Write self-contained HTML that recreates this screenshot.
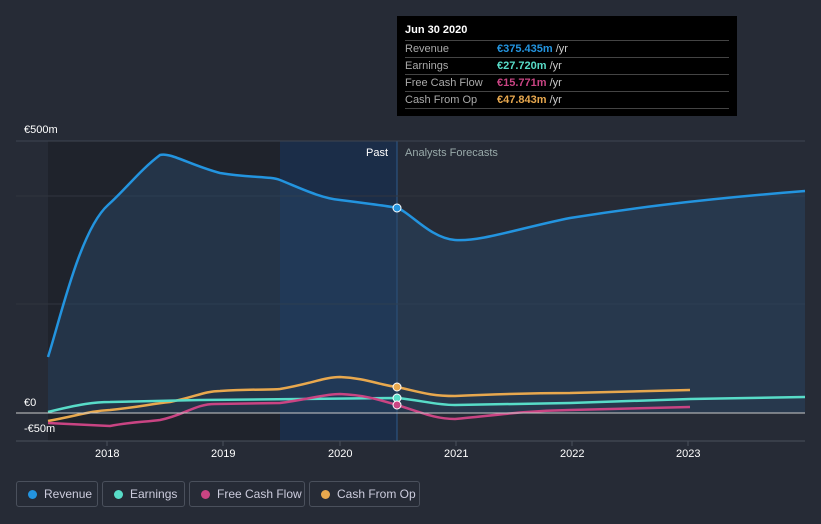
<!DOCTYPE html><html><head><style>
body{margin:0;width:821px;height:524px;background:#262b36;font-family:"Liberation Sans",sans-serif;overflow:hidden;position:relative}
.t{position:absolute;font-size:11px;color:#fff}
.lg{position:absolute;top:481px;height:26px;border:1px solid #4a505c;border-radius:3px;box-sizing:border-box;color:#ccd;font-size:12px;line-height:24px;padding-left:27px}
.lg i{position:absolute;left:11px;top:8px;width:9px;height:9px;border-radius:50%}
.tip{position:absolute;left:397px;top:16px;width:340px;height:100px;background:#000;font-size:11px}
.tip .r{position:absolute;left:8px;width:324px;border-top:1px solid #444;height:16px;line-height:16px;color:#aaa}
.tip .r b{position:absolute;left:92px;font-weight:bold}
.tip .r span{color:#ccc;font-weight:normal}
</style></head><body>
<svg width="821" height="524" style="position:absolute;left:0;top:0">
<rect x="48" y="141" width="349" height="300" fill="#1f232c"/>
<rect x="280" y="141" width="117" height="300" fill="#1a3050" opacity="0.8"/>
<line x1="397" y1="141" x2="397" y2="441" stroke="#2e5a8c" stroke-width="1"/>
<line x1="16" y1="141" x2="805" y2="141" stroke="#3f4551"/>
<line x1="16" y1="196" x2="805" y2="196" stroke="#30353f"/>
<line x1="16" y1="304" x2="805" y2="304" stroke="#30353f"/>
<line x1="16" y1="441" x2="805" y2="441" stroke="#4a505c"/>
<path d="M48,357 C60,320 80,230 108,205 C125,190 140,170 160,155 C170,152 190,165 220,173 C250,178 270,176 280,180 C300,188 320,198 340,200 C370,204 390,206 397,208 C410,212 430,238 455,240 C480,242 520,228 570,218 C620,210 690,200 805,191 L805,413 L48,413Z" fill="#2a4a6a" opacity="0.45"/>
<path d="M48,357 C60,320 80,230 108,205 C125,190 140,170 160,155 C170,152 190,165 220,173 C250,178 270,176 280,180 C300,188 320,198 340,200 C370,204 390,206 397,208 C410,212 430,238 455,240 C480,242 520,228 570,218 C620,210 690,200 805,191" fill="none" stroke="#2394df" stroke-width="2.5"/>
<path d="M48,421 C80,415 90,411 110,410 C140,407 150,404 170,402 C195,397 205,391 220,391 C250,389 270,390 280,389 C310,384 325,377 340,377 C365,378 380,385 397,387 C420,392 430,396 455,396 C500,394 530,393 570,393 L690,390" fill="none" stroke="#e8a84e" stroke-width="2.5"/>
<path d="M48,412 C80,404 95,402 110,402 L200,400 L397,398 C420,400 435,405 455,405 L570,403 L690,399 L805,397" fill="none" stroke="#58dcc8" stroke-width="2.5"/>
<path d="M48,423 L110,426 C130,422 145,422 160,420 C185,415 195,404 215,404 L280,403 C310,399 325,394 340,394 C365,395 380,400 397,405 C420,412 435,419 455,419 C490,416 520,411 570,410 L690,407" fill="none" stroke="#c94483" stroke-width="2.5"/>
<line x1="16" y1="413" x2="805" y2="413" stroke="#ccc" stroke-width="1"/>
<circle cx="397" cy="208" r="4" fill="#2394df" stroke="#fff"/>
<circle cx="397" cy="387" r="4" fill="#e8a84e" stroke="#fff"/>
<circle cx="397" cy="398" r="4" fill="#58dcc8" stroke="#fff"/>
<circle cx="397" cy="405" r="4" fill="#c94483" stroke="#fff"/>
<g stroke="#4a505c"><line x1="107" y1="441" x2="107" y2="446"/><line x1="223" y1="441" x2="223" y2="446"/><line x1="340" y1="441" x2="340" y2="446"/><line x1="456" y1="441" x2="456" y2="446"/><line x1="572" y1="441" x2="572" y2="446"/><line x1="688" y1="441" x2="688" y2="446"/></g>
</svg>
<div class="t" style="left:24px;top:124px">€500m</div>
<div class="t" style="left:24px;top:397px">€0</div>
<div class="t" style="left:24px;top:423px">-€50m</div>
<div class="t" style="left:366px;top:147px;color:#fff">Past</div>
<div class="t" style="left:405px;top:147px;color:#9aa">Analysts Forecasts</div>
<div class="t" style="left:95px;top:448px">2018</div>
<div class="t" style="left:211px;top:448px">2019</div>
<div class="t" style="left:328px;top:448px">2020</div>
<div class="t" style="left:444px;top:448px">2021</div>
<div class="t" style="left:560px;top:448px">2022</div>
<div class="t" style="left:676px;top:448px">2023</div>
<div class="tip">
<div style="position:absolute;left:8px;top:8px;color:#fff;font-weight:bold">Jun 30 2020</div>
<div class="r" style="top:24px">Revenue<b style="color:#2394df">€375.435m <span>/yr</span></b></div>
<div class="r" style="top:41px">Earnings<b style="color:#58dcc8">€27.720m <span>/yr</span></b></div>
<div class="r" style="top:58px">Free Cash Flow<b style="color:#c94483">€15.771m <span>/yr</span></b></div>
<div class="r" style="top:75px">Cash From Op<b style="color:#e8a84e">€47.843m <span>/yr</span></b></div>
<div style="position:absolute;left:8px;top:92px;width:324px;border-top:1px solid #444"></div>
</div>
<div class="lg" style="left:16px;width:82px"><i style="background:#2394df"></i>Revenue</div>
<div class="lg" style="left:102px;width:83px"><i style="background:#58dcc8"></i>Earnings</div>
<div class="lg" style="left:189px;width:116px"><i style="background:#c94483"></i>Free Cash Flow</div>
<div class="lg" style="left:309px;width:111px"><i style="background:#e8a84e"></i>Cash From Op</div>
</body></html>
